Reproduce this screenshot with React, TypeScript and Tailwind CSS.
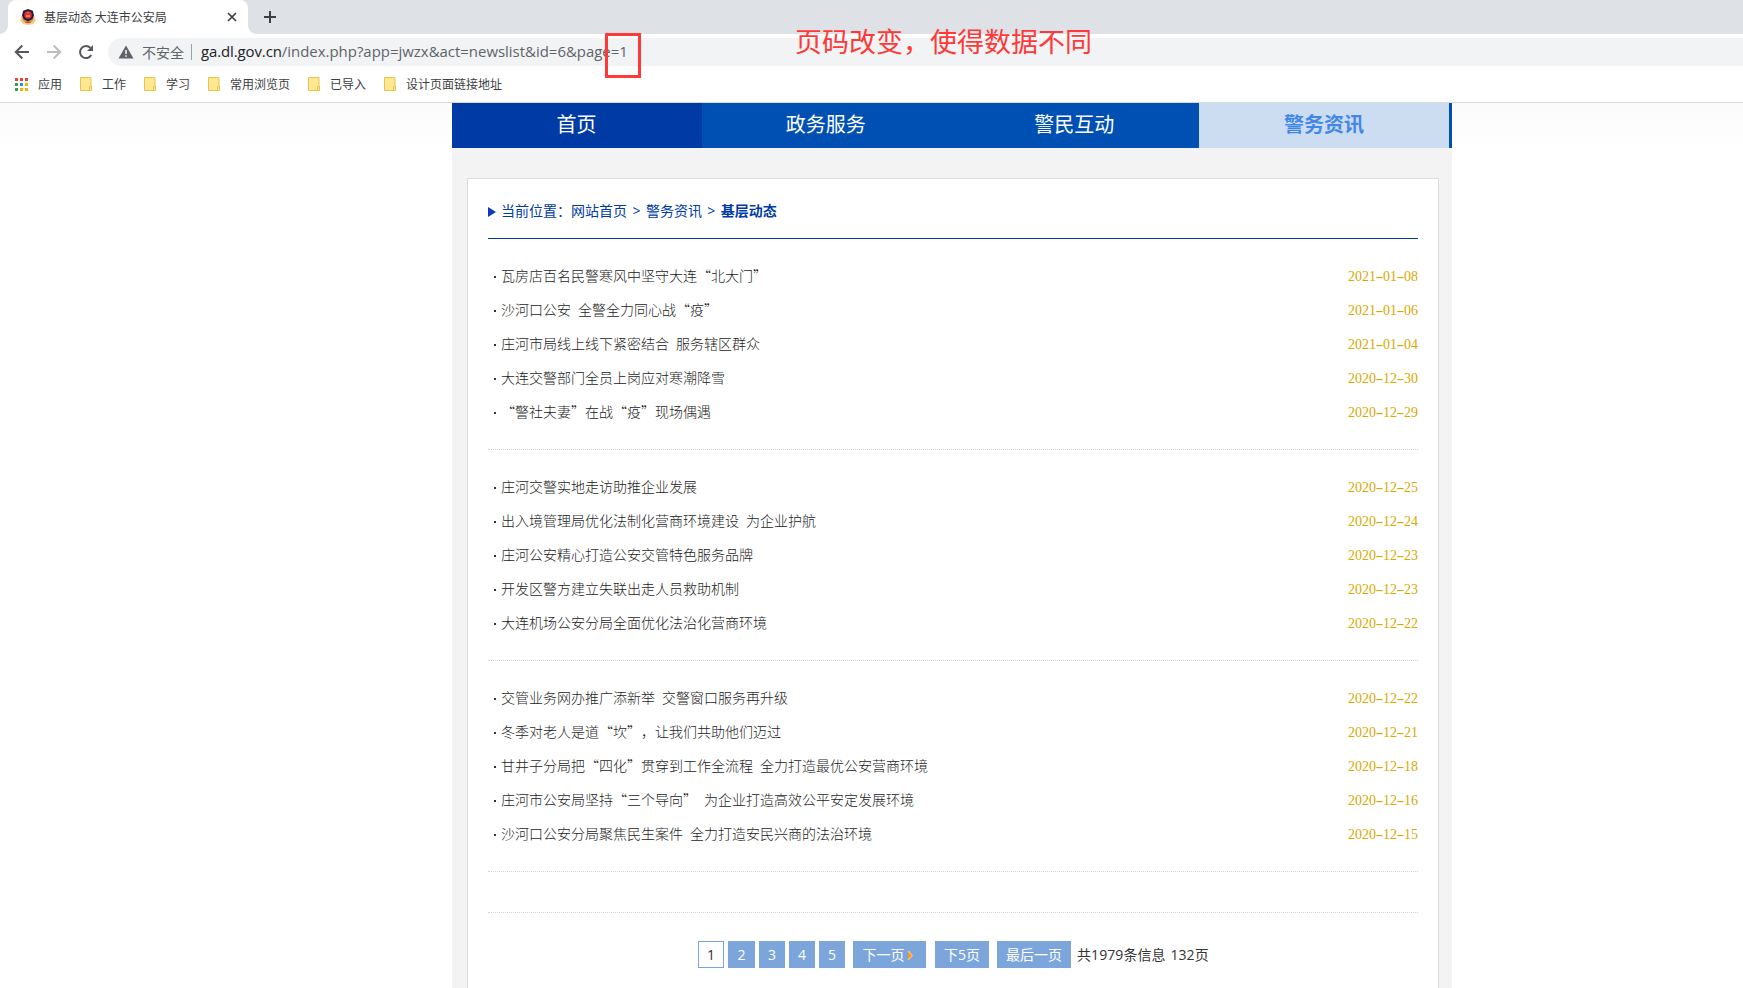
import React from "react";

const cjk = "font-['Noto_Sans_CJK_SC',sans-serif]";
const ui = "font-['Open_Sans','Noto_Sans_CJK_SC',sans-serif]";

type Item = [title: string, date: string];

const groups: Item[][] = [
  [
    ["瓦房店百名民警寒风中坚守大连“北大门”", "2021-01-08"],
    ["沙河口公安 全警全力同心战“疫”", "2021-01-06"],
    ["庄河市局线上线下紧密结合 服务辖区群众", "2021-01-04"],
    ["大连交警部门全员上岗应对寒潮降雪", "2020-12-30"],
    ["“警社夫妻”在战“疫”现场偶遇", "2020-12-29"],
  ],
  [
    ["庄河交警实地走访助推企业发展", "2020-12-25"],
    ["出入境管理局优化法制化营商环境建设 为企业护航", "2020-12-24"],
    ["庄河公安精心打造公安交管特色服务品牌", "2020-12-23"],
    ["开发区警方建立失联出走人员救助机制", "2020-12-23"],
    ["大连机场公安分局全面优化法治化营商环境", "2020-12-22"],
  ],
  [
    ["交管业务网办推广添新举 交警窗口服务再升级", "2020-12-22"],
    ["冬季对老人是道“坎”，让我们共助他们迈过", "2020-12-21"],
    ["甘井子分局把“四化”贯穿到工作全流程 全力打造最优公安营商环境", "2020-12-18"],
    ["庄河市公安局坚持“三个导向” 为企业打造高效公平安定发展环境", "2020-12-16"],
    ["沙河口公安分局聚焦民生案件 全力打造安民兴商的法治环境", "2020-12-15"],
  ],
];

function Emblem() {
  return (
    <svg width="16" height="16" viewBox="0 0 16 16" className="shrink-0">
      <path d="M1.500 7 .3 11.500 3 15.300l5 .7 5-.7 2.700-3.800L14.500 7z" fill="#f0cd8c" />
      <path d="M2 9 3.500 12.500 8 14.500l4.500-2L14 9z" fill="#dc9a3c" />
      <path d="M8 0 12.800 1.800 14 6.500 12.300 10.200 8 12.500 3.700 10.200 2 6.500 3.200 1.800z" fill="#1d1c50" />
      <circle cx="8" cy="6" r="3.800" fill="#ee2a1c" />
      <path d="M6 6.200h4v1.500H6zM7.500 3.300h1v1.200h-1z" fill="#ffb27a" />
      <path d="M5.500 12.800h5v1.200h-5z" fill="#c2452a" />
    </svg>
  );
}

function TabStrip() {
  return (
    <div className="flex h-[34px] shrink-0 bg-[#dee1e6] pl-2">
      <div className="relative flex h-[34px] w-[240px] items-center rounded-t-lg bg-white pl-3 pr-[10px]">
        <span className="absolute -left-2 bottom-0 h-2 w-2 bg-[radial-gradient(circle_at_0_0,#dee1e6_7.5px,#ffffff_8px)]" />
        <span className="absolute -right-2 bottom-0 h-2 w-2 bg-[radial-gradient(circle_at_100%_0,#dee1e6_7.5px,#ffffff_8px)]" />
        <Emblem />
        <span className={`ml-2 flex-1 whitespace-pre text-xs leading-4 text-[#3c4043] ${cjk}`}>基层动态 大连市公安局</span>
        <svg width="12" height="12" viewBox="0 0 12 12" className="shrink-0">
          <path d="M2 2l8 8M10 2l-8 8" stroke="#3c4043" strokeWidth="1.7" />
        </svg>
      </div>
      <svg width="14" height="14" viewBox="0 0 14 14" className="ml-[15px] mt-[10px]">
        <path d="M7 1v12M1 7h12" stroke="#3c4043" strokeWidth="2" />
      </svg>
    </div>
  );
}

function Toolbar() {
  return (
    <div className="flex h-9 shrink-0 items-center pl-[14px]">
      <svg width="16" height="16" viewBox="0 0 16 16">
        <path d="M15 8H2.500M8.300 1.500 1.800 8l6.500 6.500" fill="none" stroke="#55585c" strokeWidth="2" />
      </svg>
      <svg width="16" height="16" viewBox="0 0 16 16" className="ml-4">
        <path d="M1 8h12.500M7.700 1.500 14.200 8l-6.500 6.500" fill="none" stroke="#babcbe" strokeWidth="2" />
      </svg>
      <svg width="16" height="16" viewBox="0 0 16 16" className="ml-4">
        <path d="M13.300 11A6 6 0 1 1 12.400 3.900" fill="none" stroke="#55585c" strokeWidth="2" />
        <path d="M15 1v6H9z" fill="#55585c" />
      </svg>
      <div className="ml-[14px] flex h-7 flex-1 items-center rounded-l-full bg-[#f1f3f4] pl-[10px]">
        <svg width="16" height="14" viewBox="0 0 16 14">
          <path d="M8 0.500 15.500 13.500H.5z" fill="#5f6368" />
          <path d="M7.200 5h1.600v4H7.200zM7.200 10.200h1.600v1.600H7.200z" fill="#f1f3f4" />
        </svg>
        <span className={`ml-2 pb-px text-sm leading-5 text-[#5f6368] ${cjk}`}>不安全</span>
        <span className="ml-[7px] h-4 w-px bg-[#9aa0a6]" />
        <span className={`ml-[9px] whitespace-nowrap pb-[2px] text-[14.950px] leading-5 text-[#5f6368] ${ui}`}>
          <span className="tracking-[-0.100px] text-[#202124]">ga.dl.gov.cn</span>/index.php?app=jwzx&amp;act=newslist&amp;id=6&amp;page=1
        </span>
      </div>
    </div>
  );
}

const appColors = ["bg-[#ea4335]", "bg-[#ea4335]", "bg-[#ea4335]", "bg-[#34a053]", "bg-[#2b8cf0]", "bg-[#f5b400]", "bg-[#34a053]", "bg-[#f5b400]", "bg-[#f5b400]"];

function Bookmarks() {
  return (
    <div className={`flex h-8 shrink-0 items-center pb-1 pl-[15px] text-xs leading-4 text-[#3c4043] ${cjk}`}>
      <div className="grid grid-cols-3 gap-[2px]">
        {appColors.map((c, i) => (
          <span key={i} className={`h-[3px] w-[3px] ${c}`} />
        ))}
      </div>
      <span className="ml-[10px]">应用</span>
      {["工作", "学习", "常用浏览页", "已导入", "设计页面链接地址"].map((name) => (
        <div key={name} className="ml-[18px] flex items-center gap-[10px]">
          <svg width="12" height="14" viewBox="0 0 12 14">
            <path d="M.5.5h10.500v13H.5z" fill="#ffe693" stroke="#e7c54b" />
            <path d="M9.500 9.500h2v4h-2z" fill="#ffe693" stroke="#e7c54b" />
          </svg>
          <span>{name}</span>
        </div>
      ))}
    </div>
  );
}

function DateText({ value }: { value: string }) {
  return (
    <span className="flex pt-px font-['Liberation_Serif',serif] text-sm text-[#d8a900]">
      {value.split("").map((ch, i) => (
        <span key={i} className={ch === "-" ? "flex w-[7px] scale-x-[1.7] justify-center" : "w-[7px]"}>
          {ch}
        </span>
      ))}
    </span>
  );
}

const pageButton = "flex h-[27px] items-center justify-center bg-[#7ca6db] text-white";

function Pager() {
  return (
    <div className={`mt-7 flex items-center pl-[210px] text-sm leading-5 ${ui}`}>
      <span className="flex h-[27px] w-[26px] items-center justify-center border border-[#7ca6db] text-[#333]">1</span>
      <span className={`${pageButton} ml-1 w-[27px]`}>2</span>
      <span className={`${pageButton} ml-1 w-[26px]`}>3</span>
      <span className={`${pageButton} ml-1 w-[26px]`}>4</span>
      <span className={`${pageButton} ml-1 w-[26px]`}>5</span>
      <span className={`${pageButton} ml-2 w-[73px] gap-[3px] pr-[4px]`}>
        下一页
        <svg width="5" height="9" viewBox="0 0 5 9" className="mt-[2px]">
          <path d="M0 0h1l4 4.500-4 4.500H0z" fill="#ffc878" />
          <path d="M0 1 3.800 4.500 0 8z" fill="#ff9412" />
        </svg>
      </span>
      <span className={`${pageButton} ml-[9px] w-[54px]`}>下5页</span>
      <span className={`${pageButton} ml-2 w-[74px]`}>最后一页</span>
      <span className="ml-[6px] whitespace-pre tracking-[0.080px] text-[#333] [word-spacing:1px]">共1979条信息 132页</span>
    </div>
  );
}

export default function App() {
  return (
    <div className="relative flex h-[988px] w-[1743px] flex-col overflow-hidden bg-white">
      <TabStrip />
      <Toolbar />
      <Bookmarks />
      <div className="h-px shrink-0 bg-[#d9dadc]" />
      <div className="flex min-h-0 flex-1 bg-[linear-gradient(#fbfbfc,#ffffff_48px)] pl-[452px]">
        <main className="w-[1000px] shrink-0 bg-[#f3f3f3]">
          <nav className={`flex h-[45px] bg-[#0050b3] text-xl leading-[42px] text-white ${cjk}`}>
            <a className="w-[250px] bg-[#003ba5] pr-px text-center">首页</a>
            <a className="w-[248.5px] pr-px text-center">政务服务</a>
            <a className="w-[248.5px] pr-px text-center">警民互动</a>
            <a className="w-[250px] bg-[#ccdcf1] text-center font-bold text-[#4087e8]">警务资讯</a>
          </nav>
          <section className="ml-[15px] mt-[30px] h-[830px] w-[972px] border border-[#dcdcdc] bg-white px-5">
            <div className={`flex h-[60px] items-center whitespace-pre border-b border-[#003ba5] pt-[5px] text-sm leading-5 text-[#003ba5] [word-spacing:1.800px] ${ui}`}>
              <svg width="8" height="10" viewBox="0 0 8 10" className="mr-[5px] mt-[2px]">
                <path d="M0 0 8 5 0 10z" fill="#1237b8" />
              </svg>
              当前位置：网站首页 &gt; 警务资讯 &gt; <b>基层动态</b>
            </div>
            {groups.map((items, g) => (
              <ul key={g} className={`h-[211px] border-b border-dotted border-[#d6d6d6] pt-5 ${cjk}`}>
                {items.map(([title, date]) => (
                  <li key={title} className="flex h-[34px] items-center text-sm font-light leading-5 text-[#1c1c1c]">
                    <span className="ml-[6px] mr-[5px] mt-px h-[2px] w-[2px] bg-[#333]" />
                    <span className="flex-1 whitespace-pre pb-[2px] [text-spacing-trim:space-all] [word-spacing:3.900px]">{title}</span>
                    <DateText value={date} />
                  </li>
                ))}
              </ul>
            ))}
            <div className="h-[41px] border-b border-dotted border-[#d6d6d6]" />
            <Pager />
          </section>
        </main>
      </div>
      <div className="absolute left-[605px] top-[33px] h-[45px] w-9 border-[3px] border-[#ff3838]" />
      <p className={`absolute left-[795px] top-[21px] whitespace-nowrap text-[27px] leading-10 text-[#ff3838] ${cjk}`}>页码改变，使得数据不同</p>
    </div>
  );
}
